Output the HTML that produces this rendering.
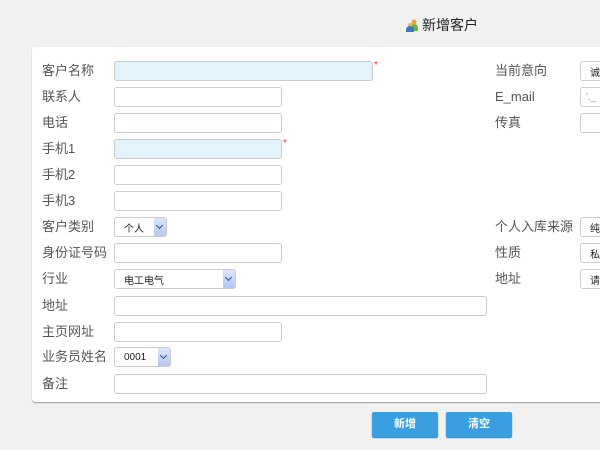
<!DOCTYPE html>
<html><head><meta charset="utf-8"><style>
body{margin:0;width:600px;height:450px;background:#f1f1f1;font-family:"Liberation Sans","Noto Sans CJK SC",sans-serif;position:relative;overflow:hidden}
.t{position:absolute;left:405px;top:15px;font-size:14px;color:#222;display:flex;align-items:center}
.p{position:absolute;left:32px;top:47px;width:580px;height:355px;background:#fff;border-radius:3px;box-shadow:0 1px 1px #999}
.l{position:absolute;font-size:13px;color:#555;line-height:20px}
.i{position:absolute;height:18px;border:1px solid #ccc;border-radius:3px;background:#fff;font-size:10px;color:#222;box-sizing:content-box;display:flex;align-items:center}
.b{background:#e2f3fc}
.s .a{position:absolute;right:0;top:0;width:12px;height:18px;background:linear-gradient(#dbe6fb,#b5c8f2);}
.s .a:after{content:"";position:absolute;left:3px;top:5px;width:4px;height:4px;border-right:1.5px solid #2c4a8a;border-bottom:1.5px solid #2c4a8a;transform:rotate(45deg)}
.r{position:absolute;color:#e33;font-size:10px}
.btn{position:absolute;top:412px;width:66px;height:25px;background:#3a9fe1;border-radius:2px;color:#fff;font-size:11px;font-weight:bold;text-align:center;line-height:25px;box-shadow:0 1px 1px #2778b0}
</style></head><body>
<div class="t"><svg width="14" height="14" viewBox="0 0 14 14" style="margin-right:3px"><circle cx="9" cy="4" r="2.5" fill="#e8a23a"/><path d="M5 13v-3a4 4 0 0 1 8 0v3z" fill="#6cb33f"/><circle cx="5" cy="7" r="2.3" fill="#f0b860"/><path d="M1 14v-2a4 4 0 0 1 8 0v2z" fill="#3a78c9"/></svg>新增客户</div>
<div class="p"></div>
<div class="l" style="left:42px;top:61px">客户名称</div><div class="i b" style="left:114px;top:61px;width:257px"></div><div class="r" style="left:374px;top:60px">*</div>
<div class="l" style="left:42px;top:87px">联系人</div><div class="i" style="left:114px;top:87px;width:166px"></div>
<div class="l" style="left:42px;top:113px">电话</div><div class="i" style="left:114px;top:113px;width:166px"></div>
<div class="l" style="left:42px;top:139px">手机1</div><div class="i b" style="left:114px;top:139px;width:166px"></div><div class="r" style="left:283px;top:138px">*</div>
<div class="l" style="left:42px;top:165px">手机2</div><div class="i" style="left:114px;top:165px;width:166px"></div>
<div class="l" style="left:42px;top:191px">手机3</div><div class="i" style="left:114px;top:191px;width:166px"></div>
<div class="l" style="left:42px;top:217px">客户类别</div><div class="i s" style="left:114px;top:217px;width:51px"><span style="padding-left:9px">个人</span><div class="a"></div></div>
<div class="l" style="left:42px;top:243px">身份证号码</div><div class="i" style="left:114px;top:243px;width:166px"></div>
<div class="l" style="left:42px;top:269px">行业</div><div class="i s" style="left:114px;top:269px;width:120px"><span style="padding-left:9px">电工电气</span><div class="a"></div></div>
<div class="l" style="left:42px;top:296px">地址</div><div class="i" style="left:114px;top:296px;width:371px"></div>
<div class="l" style="left:42px;top:322px">主页网址</div><div class="i" style="left:114px;top:322px;width:166px"></div>
<div class="l" style="left:42px;top:347px">业务员姓名</div><div class="i s" style="left:114px;top:347px;width:55px"><span style="padding-left:9px">0001</span><div class="a"></div></div>
<div class="l" style="left:42px;top:374px">备注</div><div class="i" style="left:114px;top:374px;width:371px"></div>
<div class="l" style="left:495px;top:61px">当前意向</div><div class="i" style="left:580px;top:61px;width:40px"><span style="padding-left:9px">诚</span></div>
<div class="l" style="left:495px;top:87px">E_mail</div><div class="i" style="left:580px;top:87px;width:40px"><span style="padding-left:5px;color:#999">'._</span></div>
<div class="l" style="left:495px;top:113px">传真</div><div class="i" style="left:580px;top:113px;width:40px"></div>
<div class="l" style="left:495px;top:217px">个人入库来源</div><div class="i" style="left:580px;top:217px;width:40px"><span style="padding-left:9px">纯</span></div>
<div class="l" style="left:495px;top:243px">性质</div><div class="i" style="left:580px;top:243px;width:40px"><span style="padding-left:9px">私</span></div>
<div class="l" style="left:495px;top:269px">地址</div><div class="i" style="left:580px;top:269px;width:40px"><span style="padding-left:9px">请</span></div>
<div class="btn" style="left:372px">新增</div>
<div class="btn" style="left:446px">清空</div>
</body></html>
